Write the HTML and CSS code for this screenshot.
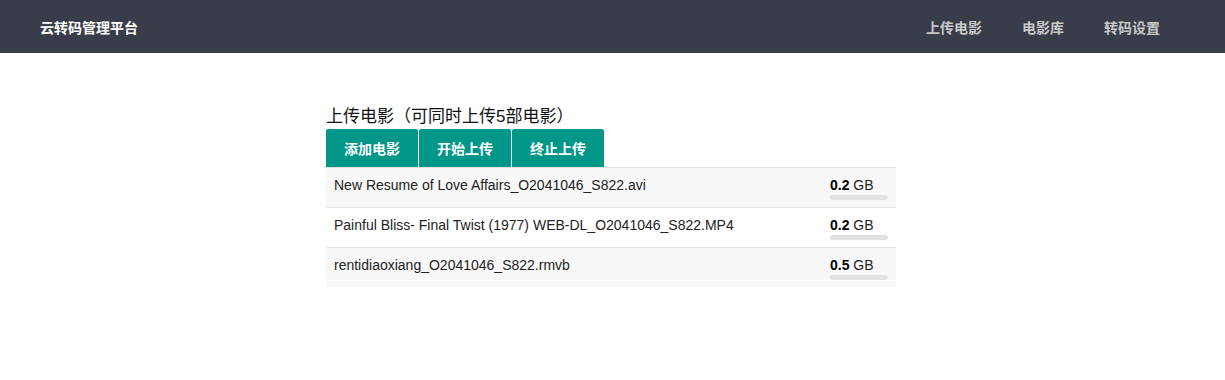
FILE: index.html
```html
<!DOCTYPE html>
<html lang="zh-CN">
<head>
    <meta charset="UTF-8">
    <title>云转码管理平台</title>
    <link rel="stylesheet" href="styles.css">
</head>
<body>
    <div class="navbar">
        <div class="brand">云转码管理平台</div>
        <div class="nav">
            <a href="#">上传电影</a>
            <a href="#">电影库</a>
            <a href="#">转码设置</a>
        </div>
    </div>
    <div class="container">
        <h3>上传电影（可同时上传5部电影）</h3>
        <div class="btn-group">
            <button>添加电影</button>
            <button>开始上传</button>
            <button>终止上传</button>
        </div>
        <table class="files">
            <tr>
                <td class="name">New Resume of Love Affairs_O2041046_S822.avi</td>
                <td class="size"><strong>0.2</strong> GB<div class="progress"></div></td>
            </tr>
            <tr>
                <td class="name">Painful Bliss- Final Twist (1977) WEB-DL_O2041046_S822.MP4</td>
                <td class="size"><strong>0.2</strong> GB<div class="progress"></div></td>
            </tr>
            <tr>
                <td class="name">rentidiaoxiang_O2041046_S822.rmvb</td>
                <td class="size"><strong>0.5</strong> GB<div class="progress"></div></td>
            </tr>
        </table>
    </div>
</body>
</html>
```

FILE: styles.css
```css
body {
    margin: 0;
    font-family: "Liberation Sans", Arial, "Noto Sans CJK SC", sans-serif;
    font-size: 14px;
    color: #333;
    background: #fff;
}
.navbar {
    display: flex;
    justify-content: space-between;
    align-items: center;
    height: 53px;
    padding: 0 40px;
    background-color: #393d49;
}
.brand {
    color: #fff;
    font-weight: bold;
    font-size: 14px;
}
.nav {
    display: flex;
    gap: 40px;
    padding-right: 25px;
}
.nav a {
    color: #c8c8c8;
    font-weight: bold;
    text-decoration: none;
    font-size: 14px;
}
.container {
    width: 570px;
    margin: 52px auto 0 326px;
}
h3 {
    margin: 0;
    font-size: 17px;
    font-weight: normal;
    color: #111;
    line-height: 24px;
}
.btn-group {
    display: flex;
}
.btn-group button {
    width: 92px;
    height: 38px;
    margin-right: 1px;
    border: none;
    border-radius: 2px 2px 0 0;
    background-color: #009688;
    color: #fff;
    font-family: inherit;
    font-weight: bold;
    font-size: 14px;
    padding: 0;
}
.files {
    width: 100%;
    border-collapse: collapse;
}
.files td {
    border-top: 1px solid #e2e2e2;
    padding: 0 8px;
    vertical-align: top;
    color: #222;
}
.files tr:nth-child(odd) td {
    background-color: #f8f8f8;
}
.files td.name {
    padding-top: 9px;
    height: 30px;
}
.files td.size {
    width: 58px;
    padding-top: 9px;
    height: 30px;
    white-space: nowrap;
}
.size strong {
    color: #000;
}
.progress {
    width: 58px;
    height: 5px;
    margin-top: 2px;
    border-radius: 3px;
    background-color: #e2e2e2;
}
```
